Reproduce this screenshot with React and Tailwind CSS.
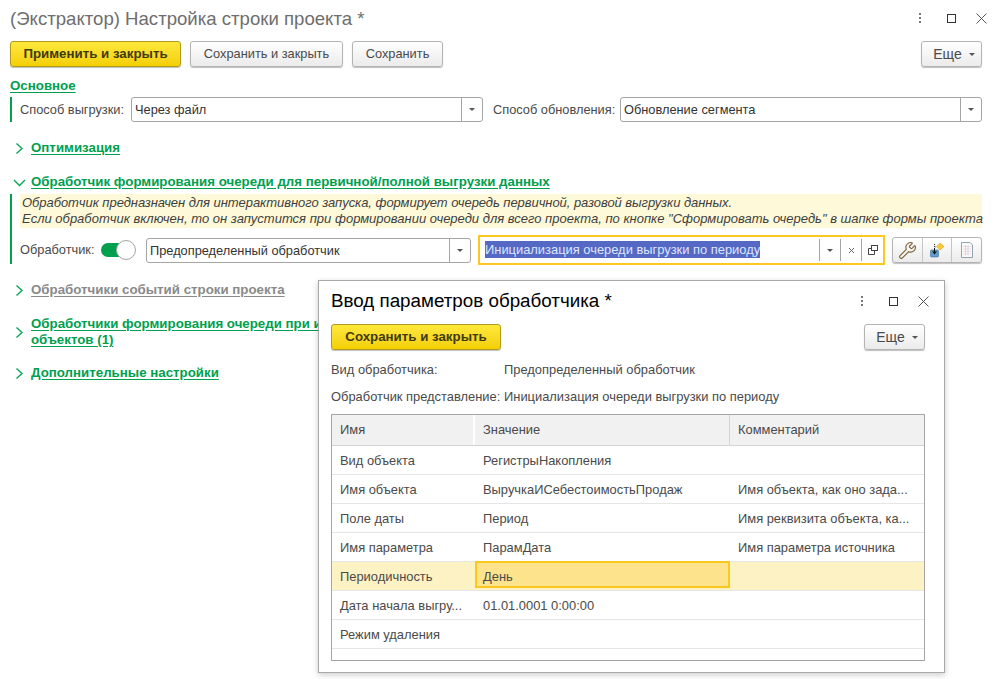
import React from 'react';
import { Wrench } from 'lucide-react';

function Btn({ children, primary, className = '' }) {
  const look = primary
    ? 'bg-gradient-to-b from-[#ffe83a] to-[#f4cf00] border-[#b39a1a] text-[#3f3a10] font-bold text-[13.3px]'
    : 'bg-gradient-to-b from-white to-[#ebebeb] border-[#b4b4b4] text-[#4a4a4a] text-[12.8px]';
  return (
    <div className={`h-[26px] flex items-center justify-center border rounded-[3px] shadow-[0_1px_1px_rgba(0,0,0,0.25)] ${look} ${className}`}>
      {children}
    </div>
  );
}

function Caret({ className = '' }) {
  return <span className={`w-0 h-0 border-x-[3px] border-x-transparent border-t-[3px] border-t-[#555] ${className}`} />;
}

function More({ className = '' }) {
  return (
    <Btn className={`w-[61px] gap-[7px] pl-[5px] ${className}`}>
      <span className="text-[14px]">Еще</span> <Caret />
    </Btn>
  );
}

function WindowIcons({ className = '' }) {
  return (
    <div className={`flex items-center text-[#555] ${className}`}>
      <svg width="4" height="12" viewBox="0 0 4 12" fill="#777">
        <rect x="1" y="0" width="2" height="2" />
        <rect x="1" y="4" width="2" height="2" />
        <rect x="1" y="8" width="2" height="2" />
      </svg>
      <span className="w-[9px] h-[9px] border border-[#333] ml-[25px]" />
      <svg className="ml-[20px]" width="11" height="11" viewBox="0 0 11 11" stroke="#555" fill="none">
        <path d="M0.5 0.5 L10.5 10.5 M10.5 0.5 L0.5 10.5" />
      </svg>
    </div>
  );
}

function Select({ value, className = '' }) {
  return (
    <div className={`h-[25px] flex items-stretch border border-[#a5a5a5] rounded-[3px] bg-white ${className}`}>
      <div className="flex-1 pl-[3px] leading-[23px] text-[12.8px] text-[#333]">{value}</div>
      <div className="w-[21px] border-l border-[#a5a5a5] flex items-center justify-center">
        <Caret />
      </div>
    </div>
  );
}

function Chevron({ open, center }) {
  return (
    <svg className={`shrink-0 ml-[3px] mr-[5px] ${center ? '' : 'mt-[3px]'}`} width="13" height="11" viewBox="0 0 13 11" fill="none" stroke="#00a651" strokeWidth="1.3">
      {open ? <path d="M1 3 L6.5 8.5 L12 3" /> : <path d="M3.5 0.5 L9 5.5 L3.5 10.5" />}
    </svg>
  );
}

function SectionTitle({ children, gray, className = '' }) {
  return (
    <div className={`text-[13.3px] font-bold leading-[16px] underline underline-offset-2 ${gray ? 'text-[#8a8a8a] decoration-[#8a8a8a]' : 'text-[#00a04e] decoration-[#00a04e]'} ${className}`}>
      {children}
    </div>
  );
}

function ToolIcons() {
  return (
    <div className="h-[26px] w-[90px] flex border border-[#b4b4b4] rounded-[3px] bg-gradient-to-b from-white to-[#ebebeb] shadow-[0_1px_1px_rgba(0,0,0,0.25)]">
      <div className="flex-1 flex items-center justify-center border-r border-[#c4c4c4]">
        <Wrench size={19} strokeWidth={1.4} color="#7a5f30" />
      </div>
      <div className="flex-1 flex items-center justify-center border-r border-[#c4c4c4]">
        <svg width="16" height="16" viewBox="0 0 16 16">
          <path d="M11 1 L15 4.5 L11 8 L7.5 4.5 Z" fill="#f5c93a" stroke="#c79a1a" strokeWidth="0.5" />
          <rect x="1.5" y="8" width="8" height="7" rx="1" fill="#5f9fd0" stroke="#3a6d96" strokeWidth="0.6" />
          <path d="M5.5 2 V5 H7" stroke="#222" strokeWidth="1" strokeDasharray="1 1" fill="none" />
          <path d="M5.5 6 V10" stroke="#111" strokeWidth="1" />
          <path d="M3 9.5 H8 L5.5 12.5 Z" fill="#111" />
        </svg>
      </div>
      <div className="flex-1 flex items-center justify-center">
        <svg width="14" height="16" viewBox="0 0 14 16">
          <path d="M1.5 0.5 H10 L12.5 3 V15.5 H1.5 Z" fill="#f7f9fb" stroke="#94a3b0" />
          <path d="M3.5 4.5 H10.5 M3.5 7 H10.5 M3.5 9.5 H10.5 M3.5 12 H10.5" stroke="#f0bcbc" strokeDasharray="1 1" />
          <path d="M5.5 3.5 V13 M8 3.5 V13" stroke="#a9c4e0" strokeDasharray="1 1" />
        </svg>
      </div>
    </div>
  );
}

const rows = [
  ['Вид объекта', 'РегистрыНакопления', ''],
  ['Имя объекта', 'ВыручкаИСебестоимостьПродаж', 'Имя объекта, как оно зада...'],
  ['Поле даты', 'Период', 'Имя реквизита объекта, ка...'],
  ['Имя параметра', 'ПарамДата', 'Имя параметра источника'],
  ['Периодичность', 'День', ''],
  ['Дата начала выгру...', '01.01.0001 0:00:00', ''],
  ['Режим удаления', '', ''],
];

function ParamsTable() {
  return (
    <div className="mt-[5px] h-[247px] border border-[#a5a5a5] text-[12.9px] text-[#4a4a4a] bg-white">
      <div className="grid grid-cols-[143px_255px_1fr] h-[31px] bg-[#f1f1f1] border-b border-[#d4d4d4] leading-[29px]">
        <div className="pl-[8px] border-r-2 border-white">Имя</div>
        <div className="pl-[8px] border-r border-[#d4d4d4]">Значение</div>
        <div className="pl-[8px]">Комментарий</div>
      </div>
      {rows.map((r, i) => {
        const active = i === 4;
        return (
          <div key={r[0]} className={`grid grid-cols-[143px_255px_1fr] h-[29px] border-b border-[#e6e6e6] leading-[29px] ${active ? 'bg-[#fdf2c4]' : ''}`}>
            <div className="pl-[8px] whitespace-nowrap overflow-hidden">{r[0]}</div>
            {active ? (
              <div className="pl-[6px] -mt-[1px] h-[27px] border-2 border-[#fac81e] bg-[#fee38d] leading-[27px]">{r[1]}</div>
            ) : (
              <div className="pl-[8px] whitespace-nowrap overflow-hidden">{r[1]}</div>
            )}
            <div className="pl-[8px] whitespace-nowrap overflow-hidden">{r[2]}</div>
          </div>
        );
      })}
    </div>
  );
}

function ParamsDialog() {
  return (
    <div className="absolute left-[318px] top-[280px] w-[627px] h-[393px] bg-white border border-[#a8a8a8] shadow-[0_2px_6px_rgba(0,0,0,0.2)] pl-[12px] pr-[19px]">
      <div className="flex items-center h-[43px] pb-[2px]">
        <div className="text-[18.8px] text-black flex-1">Ввод параметров обработчика *</div>
        <WindowIcons className="-mr-[4px]" />
      </div>
      <div className="flex justify-between">
        <Btn primary className="w-[170px]">Сохранить и закрыть</Btn>
        <More />
      </div>
      <div className="mt-[8px] h-[24px] flex items-center text-[12.9px] text-[#4a4a4a]">
        <span className="w-[173px]">Вид обработчика:</span>
        <span>Предопределенный обработчик</span>
      </div>
      <div className="mt-[3px] h-[24px] flex items-center text-[12.9px] text-[#4a4a4a]">
        <span className="w-[173px]">Обработчик представление:</span>
        <span>Инициализация очереди выгрузки по периоду</span>
      </div>
      <ParamsTable />
    </div>
  );
}

export default function App() {
  return (
    <div className="relative w-[1000px] h-[679px] overflow-hidden bg-white font-['Liberation_Sans',sans-serif] text-[12.8px] text-[#4a4a4a]">
      <div className="pl-[10px] pr-[18px] flex flex-col">
        <div className="h-[41px] pb-[4px] flex items-center justify-between">
          <div className="text-[18.6px] text-[#6e6e6e]">(Экстрактор) Настройка строки проекта *</div>
          <WindowIcons className="-mr-[5px]" />
        </div>

        <div className="flex gap-[9px]">
          <Btn primary className="w-[171px]">Применить и закрыть</Btn>
          <Btn className="w-[153px]">Сохранить и закрыть</Btn>
          <Btn className="w-[91px]">Сохранить</Btn>
          <More className="ml-auto" />
        </div>

        <SectionTitle className="mt-[11px]">Основное</SectionTitle>
        <div className="mt-[3px] flex items-center h-[25px] border-l-2 border-[#00a04e] pl-[8px]">
          <span className="w-[111px]">Способ выгрузки:</span>
          <Select value="Через файл" className="w-[352px]" />
          <span className="ml-[10px] w-[127px]">Способ обновления:</span>
          <Select value="Обновление сегмента" className="w-[362px]" />
        </div>

        <div className="mt-[18px] flex items-start">
          <Chevron />
          <SectionTitle>Оптимизация</SectionTitle>
        </div>

        <div className="mt-[18px] flex items-start">
          <Chevron open />
          <SectionTitle>Обработчик формирования очереди для первичной/полной выгрузки данных</SectionTitle>
        </div>
        <div className="mt-[4px] h-[70px] border-l-2 border-[#00a04e] pl-[8px]">
          <div className="h-[34px] bg-[#fef9d8] italic text-[13px] leading-[16px] text-[#3f3f3f] pt-[1px] pl-[2px] whitespace-nowrap">
            <span className="tracking-[-0.055px]">Обработчик предназначен для интерактивного запуска, формирует очередь первичной, разовой выгрузки данных.</span>
            <br />
            Если обработчик включен, то он запустится при формировании очереди для всего проекта, по кнопке "Сформировать очередь" в шапке формы проекта
          </div>
          <div className="mt-[7px] h-[30px] flex items-center">
            <span className="w-[81px]">Обработчик:</span>
            <div className="relative w-[34px] h-[14px] rounded-full bg-[#00a04e]">
              <span className="absolute -right-[1px] -top-[3px] w-[20px] h-[20px] rounded-full bg-white border border-[#a5a5a5]" />
            </div>
            <Select value="Предопределенный обработчик" className="ml-[11px] w-[325px]" />
            <div className="ml-[7px] w-[407px] h-[30px] flex items-stretch border-2 border-[#fac81e] bg-white py-[2px]">
              <div className="flex-1 pl-[5px] leading-[22px] text-[12.9px]">
                <span className="bg-[#5468c4] text-[#dfe6ff] inline-block leading-[17px]">Инициализация очереди выгрузки по периоду</span>
              </div>
              <div className="w-[21px] border-l border-[#a5a5a5] flex items-center justify-center">
                <Caret />
              </div>
              <div className="w-[21px] border-l border-[#a5a5a5] flex items-center justify-center">
                <svg width="7" height="7" viewBox="0 0 7 7" stroke="#666" fill="none">
                  <path d="M1 1 L6 6 M6 1 L1 6" />
                </svg>
              </div>
              <div className="w-[22px] border-l border-[#a5a5a5] flex items-center justify-center">
                <svg width="10" height="10" viewBox="0 0 10 10" stroke="#444" fill="none">
                  <rect x="3.5" y="0.5" width="6" height="5" />
                  <path d="M3 3.5 H0.5 V9.5 H6.5 V6" />
                </svg>
              </div>
            </div>
            <div className="ml-[7px]">
              <ToolIcons />
            </div>
          </div>
        </div>

        <div className="mt-[18px] flex items-start">
          <Chevron />
          <SectionTitle gray>Обработчики событий строки проекта</SectionTitle>
        </div>
        <div className="mt-[18px] flex items-center">
          <Chevron center />
          <SectionTitle className="whitespace-nowrap">
            Обработчики формирования очереди при изменении
            <br />
            объектов (1)
          </SectionTitle>
        </div>
        <div className="mt-[17px] flex items-start">
          <Chevron />
          <SectionTitle>Дополнительные настройки</SectionTitle>
        </div>
      </div>

      <ParamsDialog />
    </div>
  );
}
